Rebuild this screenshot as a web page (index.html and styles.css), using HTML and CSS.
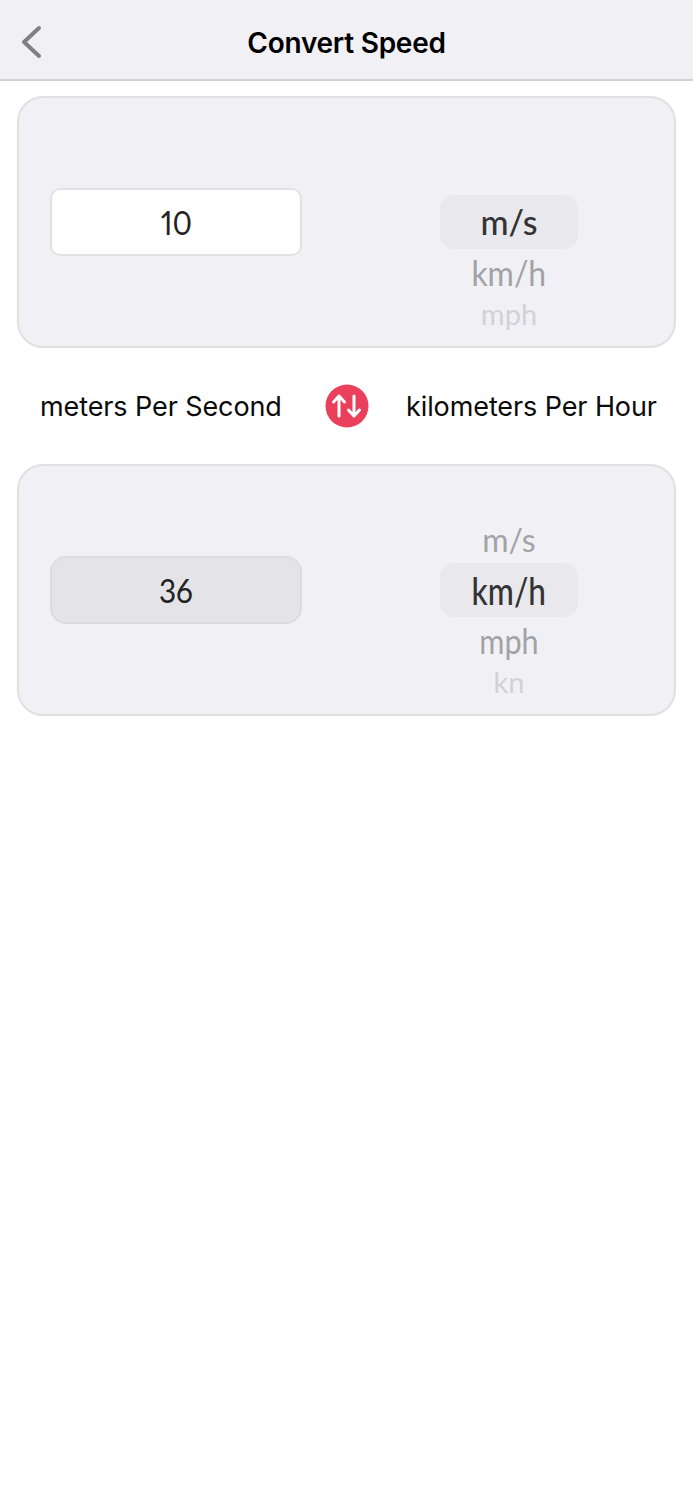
FILE: index.html
```html
<!DOCTYPE html>
<html lang="en">
<head>
    <meta charset="UTF-8">
    <meta name="viewport" content="width=device-width, initial-scale=1.0">
    <title>Convert Speed</title>
    <link rel="stylesheet" href="styles.css">
</head>
<body>
    <header class="topbar">
        <svg class="back" width="22" height="34" viewBox="0 0 22 34">
            <path d="M19 3 L4 17 L19 31" fill="none" stroke="#808082" stroke-width="4" stroke-linecap="round" stroke-linejoin="round"/>
        </svg>
        <h1>Convert Speed</h1>
    </header>

    <section class="card card-top">
        <div class="value"><span class="digits">10</span></div>
        <div class="wheel wheel-first">
            <div class="unit selected">m/s</div>
            <div class="unit near"><span class="slight">km/h</span></div>
            <div class="unit far">mph</div>
        </div>
    </section>

    <div class="names">
        <span class="name name-from">meters Per Second</span>
        <span class="swap">
            <svg width="44" height="44" viewBox="0 0 44 44">
                <circle cx="22" cy="22" r="21.5" fill="#ea405c"/>
                <path d="M14 32 V12 M8.5 18 L14 12 L19.5 18 M29 12 V32 M23.5 26 L29 32 L34.5 26" fill="none" stroke="#fff" stroke-width="3" stroke-linecap="round" stroke-linejoin="round"/>
            </svg>
        </span>
        <span class="name name-to">kilometers Per Hour</span>
    </div>

    <section class="card">
        <div class="value value-result"><span class="digits">36</span></div>
        <div class="wheel wheel-second">
            <div class="unit near small">m/s</div>
            <div class="unit selected big"><span class="narrower">km/h</span></div>
            <div class="unit near"><span class="narrow">mph</span></div>
            <div class="unit far">kn</div>
        </div>
    </section>
</body>
</html>
```

FILE: styles.css
```css
* {
    box-sizing: border-box;
}
body {
    margin: 0;
    background: #fff;
    font-family: Inter, "Liberation Sans", sans-serif;
    color: #000;
}
.topbar {
    display: flex;
    align-items: center;
    justify-content: center;
    position: relative;
    height: 81px;
    background: #f1f1f5;
    border-bottom: 2px solid #d2d2d4;
}
.topbar h1 {
    margin: 6px 0 0;
    font-size: 28px;
    font-weight: 600;
    letter-spacing: -0.25px;
}
.back {
    position: absolute;
    left: 20px;
    top: 25px;
}
.card {
    display: flex;
    align-items: flex-start;
    height: 252px;
    margin: 0 17px;
    padding: 0 0 0 31px;
    background: #f1f1f5;
    border: 2px solid #e0e0e3;
    border-radius: 26px;
}
.card-top {
    margin-top: 15px;
}
.value {
    width: 252px;
    height: 68px;
    margin-top: 90px;
    background: #fff;
    border: 2px solid #e2e2e4;
    border-radius: 10px;
    font-family: Lato, sans-serif;
    font-size: 33px;
    line-height: 64px;
    text-align: center;
    color: #222;
}
.digits {
    display: inline-block;
    font-variant-numeric: proportional-nums;
    transform: scaleX(0.9);
}
.value-result {
    background: #e4e4e8;
    border-color: #dcdcdf;
    border-radius: 16px;
}
.wheel {
    width: 138px;
    height: 248px;
    margin-left: 138px;
    overflow: hidden;
    font-family: Lato, sans-serif;
    text-align: center;
}
.wheel-first {
    padding-top: 97px;
}
.wheel-second {
    padding-top: 50px;
}
.unit {
    height: 50px;
    line-height: 48px;
    font-size: 34px;
}
.slight {
    display: inline-block;
    transform: scaleX(0.94);
}
.narrow {
    display: inline-block;
    transform: scaleX(0.9);
}
.narrower {
    display: inline-block;
    transform: scaleX(0.83);
}
.selected {
    height: 54px;
    line-height: 54px;
    background: #e9e9ed;
    border-radius: 14px;
    color: #333;
    font-weight: 500;
}
.big {
    font-size: 38px;
}
.near {
    color: #a2a2a6;
}
.small {
    height: 47px;
    font-size: 32px;
}
.far {
    height: 30px;
    line-height: 30px;
    font-size: 29px;
    color: #d2d2d6;
}
.names {
    display: flex;
    align-items: center;
    height: 116px;
    font-size: 27px;
    letter-spacing: -0.1px;
    color: #0a0a0a;
    white-space: nowrap;
}
.name-from {
    width: 285px;
    margin-left: 40px;
}
.swap {
    display: flex;
    width: 81px;
}
```
